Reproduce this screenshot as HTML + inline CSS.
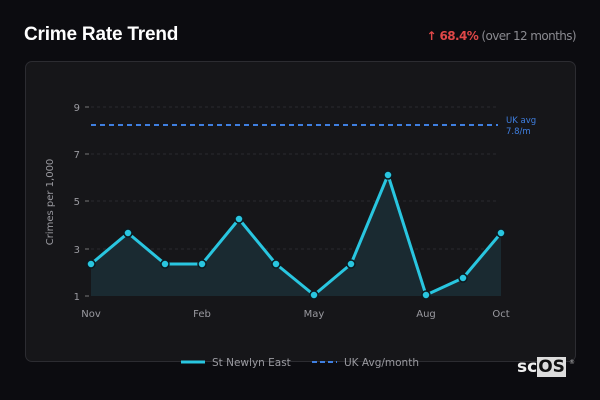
<!DOCTYPE html>
<html><head><style>
body{margin:0;width:600px;height:400px;background:#0c0c10;font-family:"Liberation Sans","DejaVu Sans",sans-serif;position:relative;overflow:hidden}
.t{position:absolute;left:24px;top:24px;color:#fff;font-weight:bold;font-size:19px;font-family:"Liberation Sans",sans-serif;letter-spacing:-0.2px}
.r{position:absolute;right:24px;top:29px;font-size:12px;color:#8a8a90;font-family:"DejaVu Sans",sans-serif;letter-spacing:-0.6px}
.r b{color:#e04848}
.p{position:absolute;left:25px;top:61px;width:549px;height:299px;background:#161619;border:1px solid #2c2c31;border-radius:7px}
svg{position:absolute;left:0;top:0}
.logo{position:absolute;left:517px;top:357px;font-family:"DejaVu Sans",sans-serif;font-size:17px;color:#eee;font-weight:bold}
.logo span{background:#ddd;color:#111;padding:0 1px}
</style></head><body>
<div class="t">Crime Rate Trend</div>
<div class="r"><b>↑ 68.4%</b> (over 12 months)</div>
<div class="p"></div>
<svg width="600" height="400" font-family="DejaVu Sans,sans-serif">
<g stroke="#29292e" stroke-dasharray="3,3" stroke-width="1">
<line x1="91" y1="107" x2="498" y2="107"/><line x1="91" y1="154" x2="498" y2="154"/><line x1="91" y1="201" x2="498" y2="201"/><line x1="91" y1="249" x2="498" y2="249"/>
</g>
<g fill="#9a9aa0" font-size="10" text-anchor="end">
<text x="80" y="111">9</text><text x="80" y="158">7</text><text x="80" y="205">5</text><text x="80" y="253">3</text><text x="80" y="300">1</text>
</g>
<g stroke="#777" stroke-width="1"><line x1="85" y1="107" x2="89" y2="107"/><line x1="85" y1="154" x2="89" y2="154"/><line x1="85" y1="201" x2="89" y2="201"/><line x1="85" y1="249" x2="89" y2="249"/><line x1="85" y1="296" x2="89" y2="296"/></g>
<text transform="translate(53,202) rotate(-90)" fill="#9a9aa0" font-size="10" text-anchor="middle">Crimes per 1,000</text>
<g fill="#9a9aa0" font-size="10" text-anchor="middle">
<text x="91" y="317">Nov</text><text x="202" y="317">Feb</text><text x="314" y="317">May</text><text x="426" y="317">Aug</text><text x="501" y="317">Oct</text>
</g>
<line x1="91" y1="125" x2="498" y2="125" stroke="#3f7fe0" stroke-width="2" stroke-dasharray="5,4"/>
<text x="506" y="123" fill="#3f7fe0" font-size="8.5">UK avg</text>
<text x="506" y="134" fill="#3f7fe0" font-size="8.5">7.8/m</text>
<polygon fill="#1a2a31" points="91,296 91,264 128,233 165,264 202,264 239,219 276,264 314,295 351,264 388,175 426,295 463,278 501,233 501,296"/>
<polyline fill="none" stroke="#29c6e0" stroke-width="3" stroke-linejoin="round" points="91,264 128,233 165,264 202,264 239,219 276,264 314,295 351,264 388,175 426,295 463,278 501,233"/>
<g fill="#29c6e0" stroke="#0c1a20" stroke-width="1.5">
<circle cx="91" cy="264" r="4"/><circle cx="128" cy="233" r="4"/><circle cx="165" cy="264" r="4"/><circle cx="202" cy="264" r="4"/><circle cx="239" cy="219" r="4"/><circle cx="276" cy="264" r="4"/><circle cx="314" cy="295" r="4"/><circle cx="351" cy="264" r="4"/><circle cx="388" cy="175" r="4"/><circle cx="426" cy="295" r="4"/><circle cx="463" cy="278" r="4"/><circle cx="501" cy="233" r="4"/>
</g>
<line x1="181" y1="362" x2="205" y2="362" stroke="#29c6e0" stroke-width="3"/>
<text x="212" y="366" fill="#9a9aa0" font-size="10.5">St Newlyn East</text>
<line x1="312" y1="362" x2="337" y2="362" stroke="#3f7fe0" stroke-width="2" stroke-dasharray="5,3"/>
<text x="344" y="366" fill="#9a9aa0" font-size="10.5">UK Avg/month</text>
<text x="569" y="364" fill="#bbb" font-size="6">®</text>
</svg>
<div class="logo">sc<span>OS</span></div>
</body></html>
